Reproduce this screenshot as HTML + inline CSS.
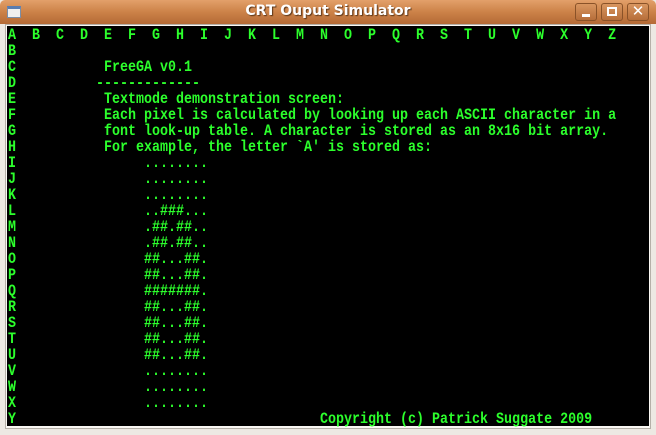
<!DOCTYPE html>
<html><head><meta charset="utf-8"><style>
html,body{margin:0;padding:0;}
body{width:656px;height:435px;background:#ede9e3;position:relative;overflow:hidden;}
#title{position:absolute;left:0;top:0;width:656px;height:24px;border-radius:5px 5px 0 0;
background:linear-gradient(#e3a06a,#cc8248 50%,#b46a36);}
#title .t{position:absolute;left:0;right:0;top:3px;text-align:center;color:#fff;font:bold 14px "DejaVu Sans","Liberation Sans",sans-serif;text-shadow:1px 1px 1px #5a3518;}
#icon{position:absolute;left:7px;top:6px;width:14px;height:12px;background:#f0f0f0;border:1px solid #7a8ea8;border-top:3px solid #5a7cb0;box-sizing:border-box;}
.btn{position:absolute;top:3px;width:22px;height:18px;border:1px solid #8a5228;border-radius:3px;background:linear-gradient(#d99660,#b66e3a);box-sizing:border-box;}
#frame{position:absolute;left:5px;top:24px;width:646px;height:405px;background:#faf8f4;border:1px solid #b5b0a8;box-sizing:border-box;}
#scr{position:absolute;left:7px;top:26px;width:642px;height:400px;background:#000;}
pre{position:absolute;left:8px;top:27px;margin:0;font:bold 16px/16px "Liberation Mono",monospace;color:#2cff2c;white-space:pre;transform:scaleX(0.8333);transform-origin:0 0;}
</style></head><body>
<div id="title"><div id="icon"></div><div class="t">CRT Ouput Simulator</div>
<div class="btn" style="left:575px"><div style="position:absolute;left:6px;top:10px;width:8px;height:3px;background:#fff"></div></div>
<div class="btn" style="left:601px"><div style="position:absolute;left:5px;top:3px;width:10px;height:9px;border:2px solid #fff;box-sizing:border-box"></div></div>
<div class="btn" style="left:627px"><div style="position:absolute;left:0;top:-2px;width:20px;text-align:center;color:#fff;font:bold 15px 'DejaVu Sans',sans-serif">✕</div></div>
</div>
<div id="frame"></div>
<div id="scr"></div>
<pre>A  B  C  D  E  F  G  H  I  J  K  L  M  N  O  P  Q  R  S  T  U  V  W  X  Y  Z
B
C           FreeGA v0.1
D          -------------
E           Textmode demonstration screen:
F           Each pixel is calculated by looking up each ASCII character in a
G           font look-up table. A character is stored as an 8x16 bit array.
H           For example, the letter `A' is stored as:
I                ........
J                ........
K                ........
L                ..###...
M                .##.##..
N                .##.##..
O                ##...##.
P                ##...##.
Q                #######.
R                ##...##.
S                ##...##.
T                ##...##.
U                ##...##.
V                ........
W                ........
X                ........
Y                                      Copyright (c) Patrick Suggate 2009</pre>
</body></html>
